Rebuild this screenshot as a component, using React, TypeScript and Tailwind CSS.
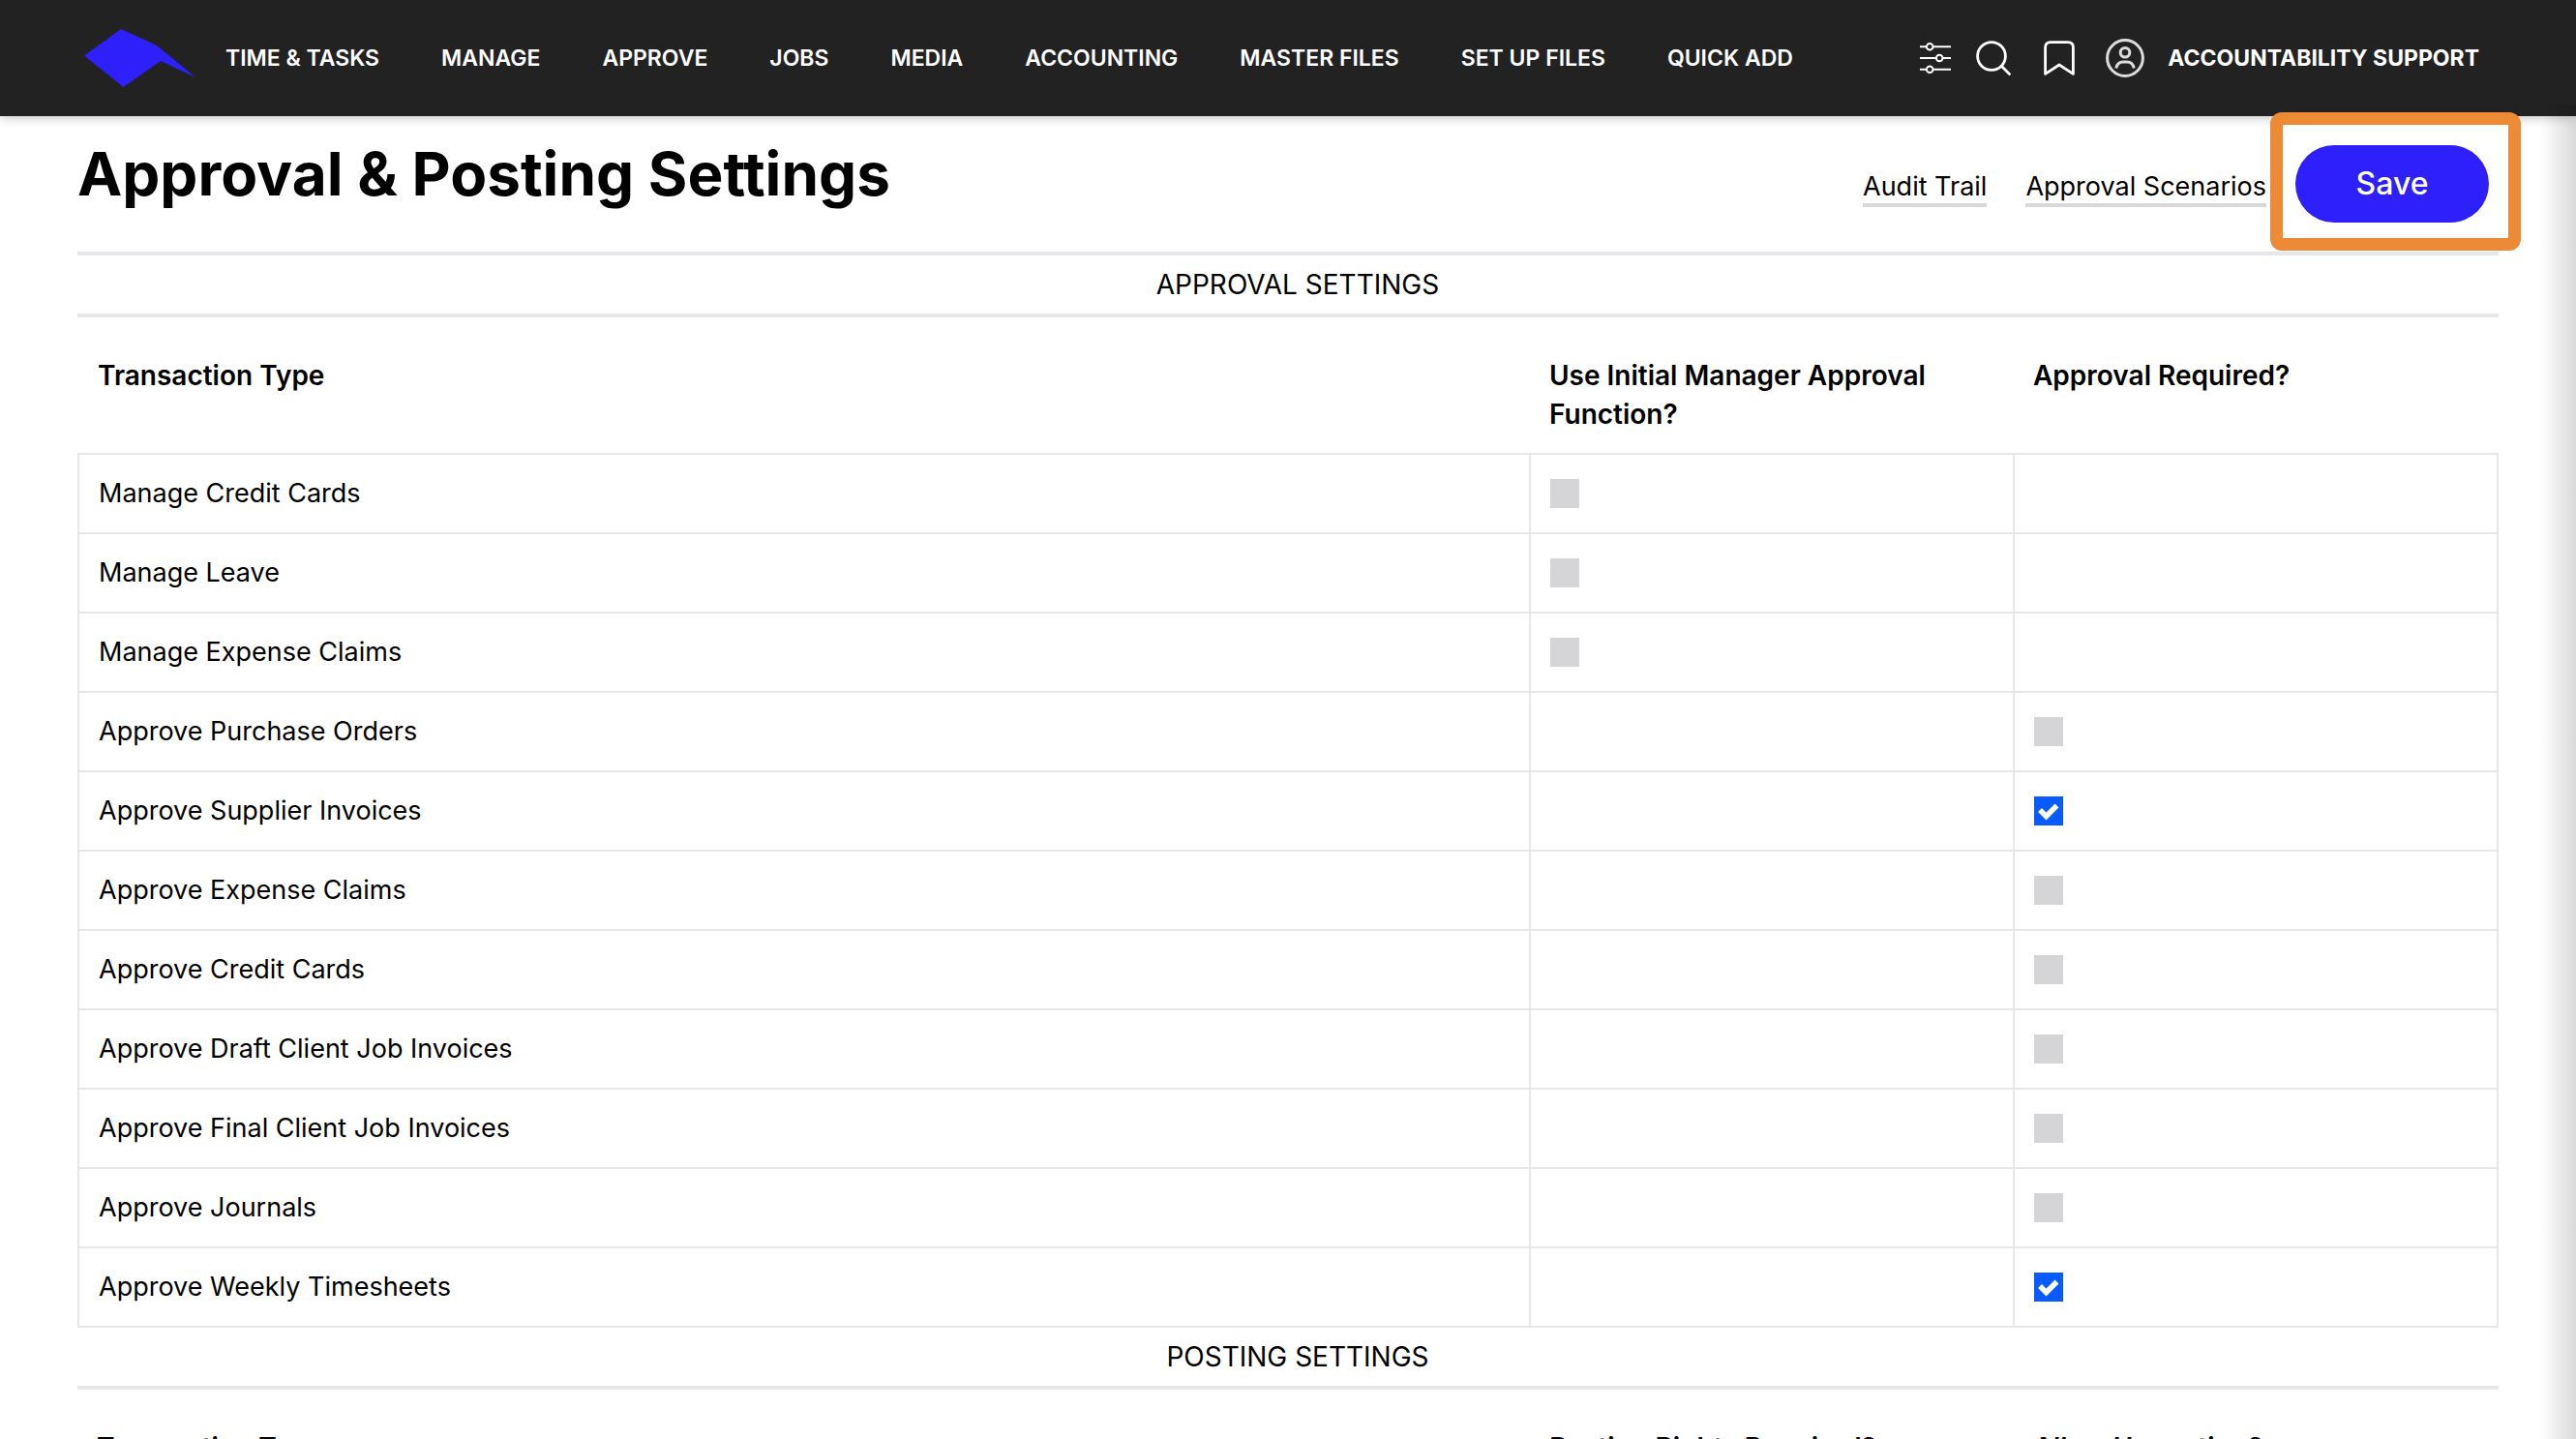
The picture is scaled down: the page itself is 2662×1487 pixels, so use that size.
const navItems = ['TIME & TASKS', 'MANAGE', 'APPROVE', 'JOBS', 'MEDIA', 'ACCOUNTING', 'MASTER FILES', 'SET UP FILES', 'QUICK ADD']

type Row = { name: string; manager?: boolean; approval?: boolean }

const rows: Row[] = [
  { name: 'Manage Credit Cards', manager: false },
  { name: 'Manage Leave', manager: false },
  { name: 'Manage Expense Claims', manager: false },
  { name: 'Approve Purchase Orders', approval: false },
  { name: 'Approve Supplier Invoices', approval: true },
  { name: 'Approve Expense Claims', approval: false },
  { name: 'Approve Credit Cards', approval: false },
  { name: 'Approve Draft Client Job Invoices', approval: false },
  { name: 'Approve Final Client Job Invoices', approval: false },
  { name: 'Approve Journals', approval: false },
  { name: 'Approve Weekly Timesheets', approval: true },
]

function Logo() {
  return (
    <svg viewBox="0 0 116 60" className="h-[60px] w-[116px]" fill="#2d20fb">
      <path d="M38 0L72 15.5Q75 17 77.5 19L115 50L79 33L40.5 60L0 27.5Z" />
    </svg>
  )
}

function SlidersIcon() {
  return (
    <svg viewBox="0 0 32 34" className="h-[34px] w-[32px]" fill="none" stroke="white" strokeWidth="2">
      <path d="M0 5.3H7M13.5 5.3H32M0 17H17M23.5 17H32M0 28.7H7M13.5 28.7H32" />
      <circle cx="10.2" cy="5.3" r="3.3" />
      <circle cx="20.2" cy="17" r="3.3" />
      <circle cx="10.2" cy="28.7" r="3.3" />
    </svg>
  )
}

function SearchIcon() {
  return (
    <svg viewBox="0 0 36 36" className="size-[36px]" fill="none" stroke="white" strokeWidth="2.8" strokeLinecap="round">
      <circle cx="16" cy="16" r="14.4" />
      <path d="M26.5 26.5L34.5 34.5" />
    </svg>
  )
}

function BookmarkIcon() {
  return (
    <svg viewBox="0 0 32 36" className="h-[36px] w-[32px]" fill="none" stroke="white" strokeWidth="2.8" strokeLinejoin="round">
      <path d="M1.6 34.4V7Q1.6 1.6 7 1.6H25Q30.4 1.6 30.4 7V34.4L16 25Z" />
    </svg>
  )
}

function UserIcon() {
  return (
    <svg viewBox="0 0 40 40" className="size-[40px]" fill="none" stroke="#dcdcdc" strokeWidth="3">
      <circle cx="20" cy="20" r="18.4" />
      <circle cx="20" cy="14.3" r="4.8" />
      <path d="M10.8 30.5Q12 24 18 24H22Q28 24 29.2 30.5" />
    </svg>
  )
}

function Tick({ label, checked }: { label: string; checked: boolean }) {
  return (
    <label className="relative block size-[30px]">
      <input
        type="checkbox"
        aria-label={label}
        defaultChecked={checked}
        className="peer block size-[30px] appearance-none bg-[#d5d5d7] checked:bg-[#0a5bfd]"
      />
      <svg viewBox="0 0 30 30" className="pointer-events-none absolute inset-0 hidden peer-checked:block" fill="none" stroke="white" strokeWidth="5.5">
        <path d="M6 14L12.5 20.5L23.5 9.5" />
      </svg>
    </label>
  )
}

function SectionTitle({ children }: { children: string }) {
  return <h2 className="border-b-4 border-[#e5e7eb] py-2 pl-5 text-center text-[28px] leading-[44px]">{children}</h2>
}

function HeadRow({ titles }: { titles: string[] }) {
  return (
    <thead>
      <tr className="text-left align-top text-[28px] leading-[40px]">
        {titles.map((title) => (
          <th key={title} className="px-5 pt-10 pb-5 font-semibold">
            {title}
          </th>
        ))}
      </tr>
    </thead>
  )
}

function Columns() {
  return (
    <colgroup>
      <col className="w-[60%]" />
      <col className="w-[20%]" />
      <col className="w-[20%]" />
    </colgroup>
  )
}

export default function App() {
  return (
    <div className="relative h-screen overflow-hidden bg-white font-['Inter',sans-serif] text-black">
      <header className="relative flex h-[120px] items-center bg-[#222222] pr-[100px] pl-[87px] text-white shadow-[0_0_12px_rgba(0,0,0,0.3)]">
        <a href="#" aria-label="Home">
          <Logo />
        </a>
        <nav className="ml-[30px] flex gap-16 text-[23px] font-semibold whitespace-nowrap">
          {navItems.map((item) => (
            <a key={item} href="#">
              {item}
            </a>
          ))}
        </nav>
        <div className="ml-auto flex items-center text-[23px] font-bold whitespace-nowrap">
          <button aria-label="Filters" className="mr-[26px]">
            <SlidersIcon />
          </button>
          <button aria-label="Search" className="mr-[34px]">
            <SearchIcon />
          </button>
          <button aria-label="Bookmarks" className="mr-8">
            <BookmarkIcon />
          </button>
          <a href="#" className="flex items-center gap-6">
            <UserIcon />
            ACCOUNTABILITY SUPPORT
          </a>
        </div>
      </header>

      <main className="px-20">
        <div className="flex h-[140px] justify-between">
          <h1 className="pt-6 text-[62px] leading-[72px] font-bold">Approval &amp; Posting Settings</h1>
          <div className="flex items-start gap-10 text-[27px]">
            <a href="#" className="mt-14 border-b-4 border-[#d8d8d8] leading-[34px]">
              Audit Trail
            </a>
            <a href="#" className="mt-14 border-b-4 border-[#d8d8d8] leading-[34px]">
              Approval Scenarios
            </a>
            <div className="relative mt-[30px] -ml-[10px] mr-[10px]">
              <button className="h-20 w-[200px] rounded-full bg-[#2d20fb] text-[32px] font-medium text-white">Save</button>
              <div className="pointer-events-none absolute -top-[34px] -right-[33px] -bottom-[29px] -left-[26px] rounded-xl border-[13px] border-[#ec8a35]" />
            </div>
          </div>
        </div>

        <div className="border-t-4 border-[#e5e7eb]">
          <SectionTitle>APPROVAL SETTINGS</SectionTitle>
        </div>
        <table className="w-full table-fixed border-collapse">
          <Columns />
          <HeadRow titles={['Transaction Type', 'Use Initial Manager Approval Function?', 'Approval Required?']} />
          <tbody>
            {rows.map((row) => (
              <tr key={row.name} className="h-[82px] text-[27px]">
                <td className="border-2 border-[#e5e7e9] px-5">{row.name}</td>
                <td className="border-2 border-[#e5e7e9] px-5">
                  {row.manager !== undefined && <Tick label={row.name} checked={row.manager} />}
                </td>
                <td className="border-2 border-[#e5e7e9] px-5">
                  {row.approval !== undefined && <Tick label={row.name} checked={row.approval} />}
                </td>
              </tr>
            ))}
          </tbody>
        </table>

        <SectionTitle>POSTING SETTINGS</SectionTitle>
        <table className="w-full table-fixed border-collapse">
          <Columns />
          <HeadRow titles={['Transaction Type', 'Posting Rights Required?', 'Allow Unposting?']} />
        </table>
      </main>

      <div className="pointer-events-none absolute top-[108px] right-0 bottom-0 w-9 bg-linear-to-r from-transparent to-black/15" />
    </div>
  )
}
